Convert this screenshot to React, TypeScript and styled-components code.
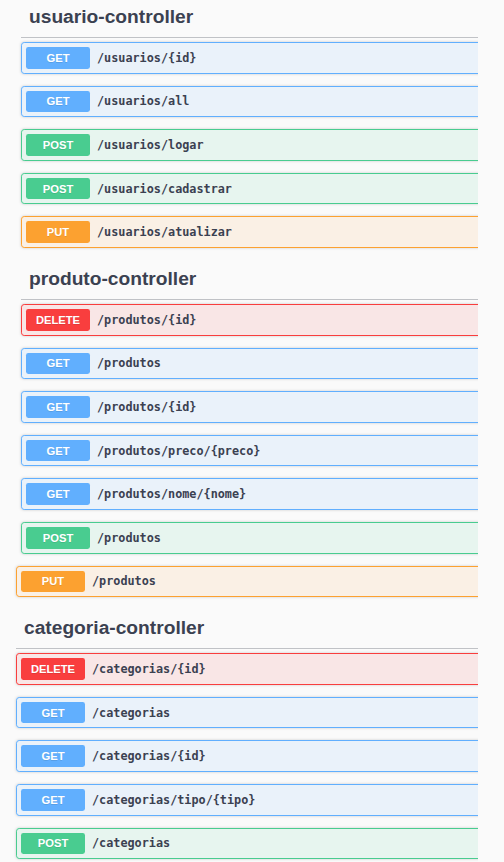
import React from "react";
import styled, { createGlobalStyle } from "styled-components";

type Method = "GET" | "POST" | "PUT" | "DELETE";

const palette: Record<Method, { main: string; bg: string }> = {
  GET: { main: "#61affe", bg: "rgba(97,175,254,.1)" },
  POST: { main: "#49cc90", bg: "rgba(73,204,144,.1)" },
  PUT: { main: "#fca130", bg: "rgba(252,161,48,.1)" },
  DELETE: { main: "#f93e3e", bg: "rgba(249,62,62,.1)" },
};

type Op = { method: Method; path: string };
type Section = { title?: string; ops: Op[] };
type Pane = { inset: number; sections: Section[] };

const panes: Pane[] = [
  {
    inset: 21,
    sections: [
      {
        title: "usuario-controller",
        ops: [
          { method: "GET", path: "/usuarios/{id}" },
          { method: "GET", path: "/usuarios/all" },
          { method: "POST", path: "/usuarios/logar" },
          { method: "POST", path: "/usuarios/cadastrar" },
          { method: "PUT", path: "/usuarios/atualizar" },
        ],
      },
      {
        title: "produto-controller",
        ops: [
          { method: "DELETE", path: "/produtos/{id}" },
          { method: "GET", path: "/produtos" },
          { method: "GET", path: "/produtos/{id}" },
          { method: "GET", path: "/produtos/preco/{preco}" },
          { method: "GET", path: "/produtos/nome/{nome}" },
          { method: "POST", path: "/produtos" },
        ],
      },
    ],
  },
  {
    inset: 16,
    sections: [
      { ops: [{ method: "PUT", path: "/produtos" }] },
      {
        title: "categoria-controller",
        ops: [
          { method: "DELETE", path: "/categorias/{id}" },
          { method: "GET", path: "/categorias" },
          { method: "GET", path: "/categorias/{id}" },
          { method: "GET", path: "/categorias/tipo/{tipo}" },
          { method: "POST", path: "/categorias" },
        ],
      },
    ],
  },
];

const GlobalStyle = createGlobalStyle`
  html, body {
    margin: 0;
    padding: 0;
    overflow: hidden;
    background: #fafafa;
  }
  body {
    font-family: "Liberation Sans", Arial, sans-serif;
  }
`;

const Page = styled.div`
  width: 504px;
  height: 862px;
  overflow: hidden;
  display: flex;
`;

const Column = styled.div`
  width: 478px;
  flex: none;
  overflow: hidden;
  margin-top: -2px;
`;

const PaneBox = styled.div<{ $inset: number }>`
  padding-left: ${(p) => p.$inset}px;
`;

const TagHeader = styled.h3`
  margin: 0 -20px 4px 0;
  padding: 7px 16px 9px 8px;
  font-family: "Liberation Sans", Arial, sans-serif;
  font-weight: 700;
  font-size: 19.2px;
  line-height: 23px;
  color: #3b4151;
  border-bottom: 1px solid rgba(59, 65, 81, 0.3);
`;

const OpRow = styled.div<{ $method: Method }>`
  box-sizing: border-box;
  height: 31.6px;
  margin: 0 -20px 12px 0;
  padding: 4px;
  display: flex;
  align-items: center;
  border: 1px solid ${(p) => palette[p.$method].main};
  background: ${(p) => palette[p.$method].bg};
  border-radius: 3.2px;
  box-shadow: 0 0 3px rgba(0, 0, 0, 0.19);
`;

const Badge = styled.span<{ $method: Method }>`
  flex: none;
  width: 64px;
  height: 21.6px;
  display: flex;
  align-items: center;
  justify-content: center;
  border-radius: 2.4px;
  background: ${(p) => palette[p.$method].main};
  color: #fff;
  font-family: "Liberation Sans", Arial, sans-serif;
  font-weight: 700;
  font-size: 11.2px;
  text-shadow: 0 1px 0 rgba(0, 0, 0, 0.1);
`;

const PathText = styled.span`
  padding-left: 7px;
  font-family: "DejaVu Sans Mono", "Liberation Mono", monospace;
  font-weight: 700;
  font-size: 11.8px;
  color: #3b4151;
  white-space: nowrap;
`;

export default function App() {
  return (
    <>
      <GlobalStyle />
      <Page>
        <Column>
          {panes.map((pane, pi) => (
            <PaneBox key={pi} $inset={pane.inset}>
              {pane.sections.map((section, si) => (
                <section key={si}>
                  {section.title && <TagHeader>{section.title}</TagHeader>}
                  {section.ops.map((op, oi) => (
                    <OpRow key={oi} $method={op.method}>
                      <Badge $method={op.method}>{op.method}</Badge>
                      <PathText>{op.path}</PathText>
                    </OpRow>
                  ))}
                </section>
              ))}
            </PaneBox>
          ))}
        </Column>
      </Page>
    </>
  );
}
